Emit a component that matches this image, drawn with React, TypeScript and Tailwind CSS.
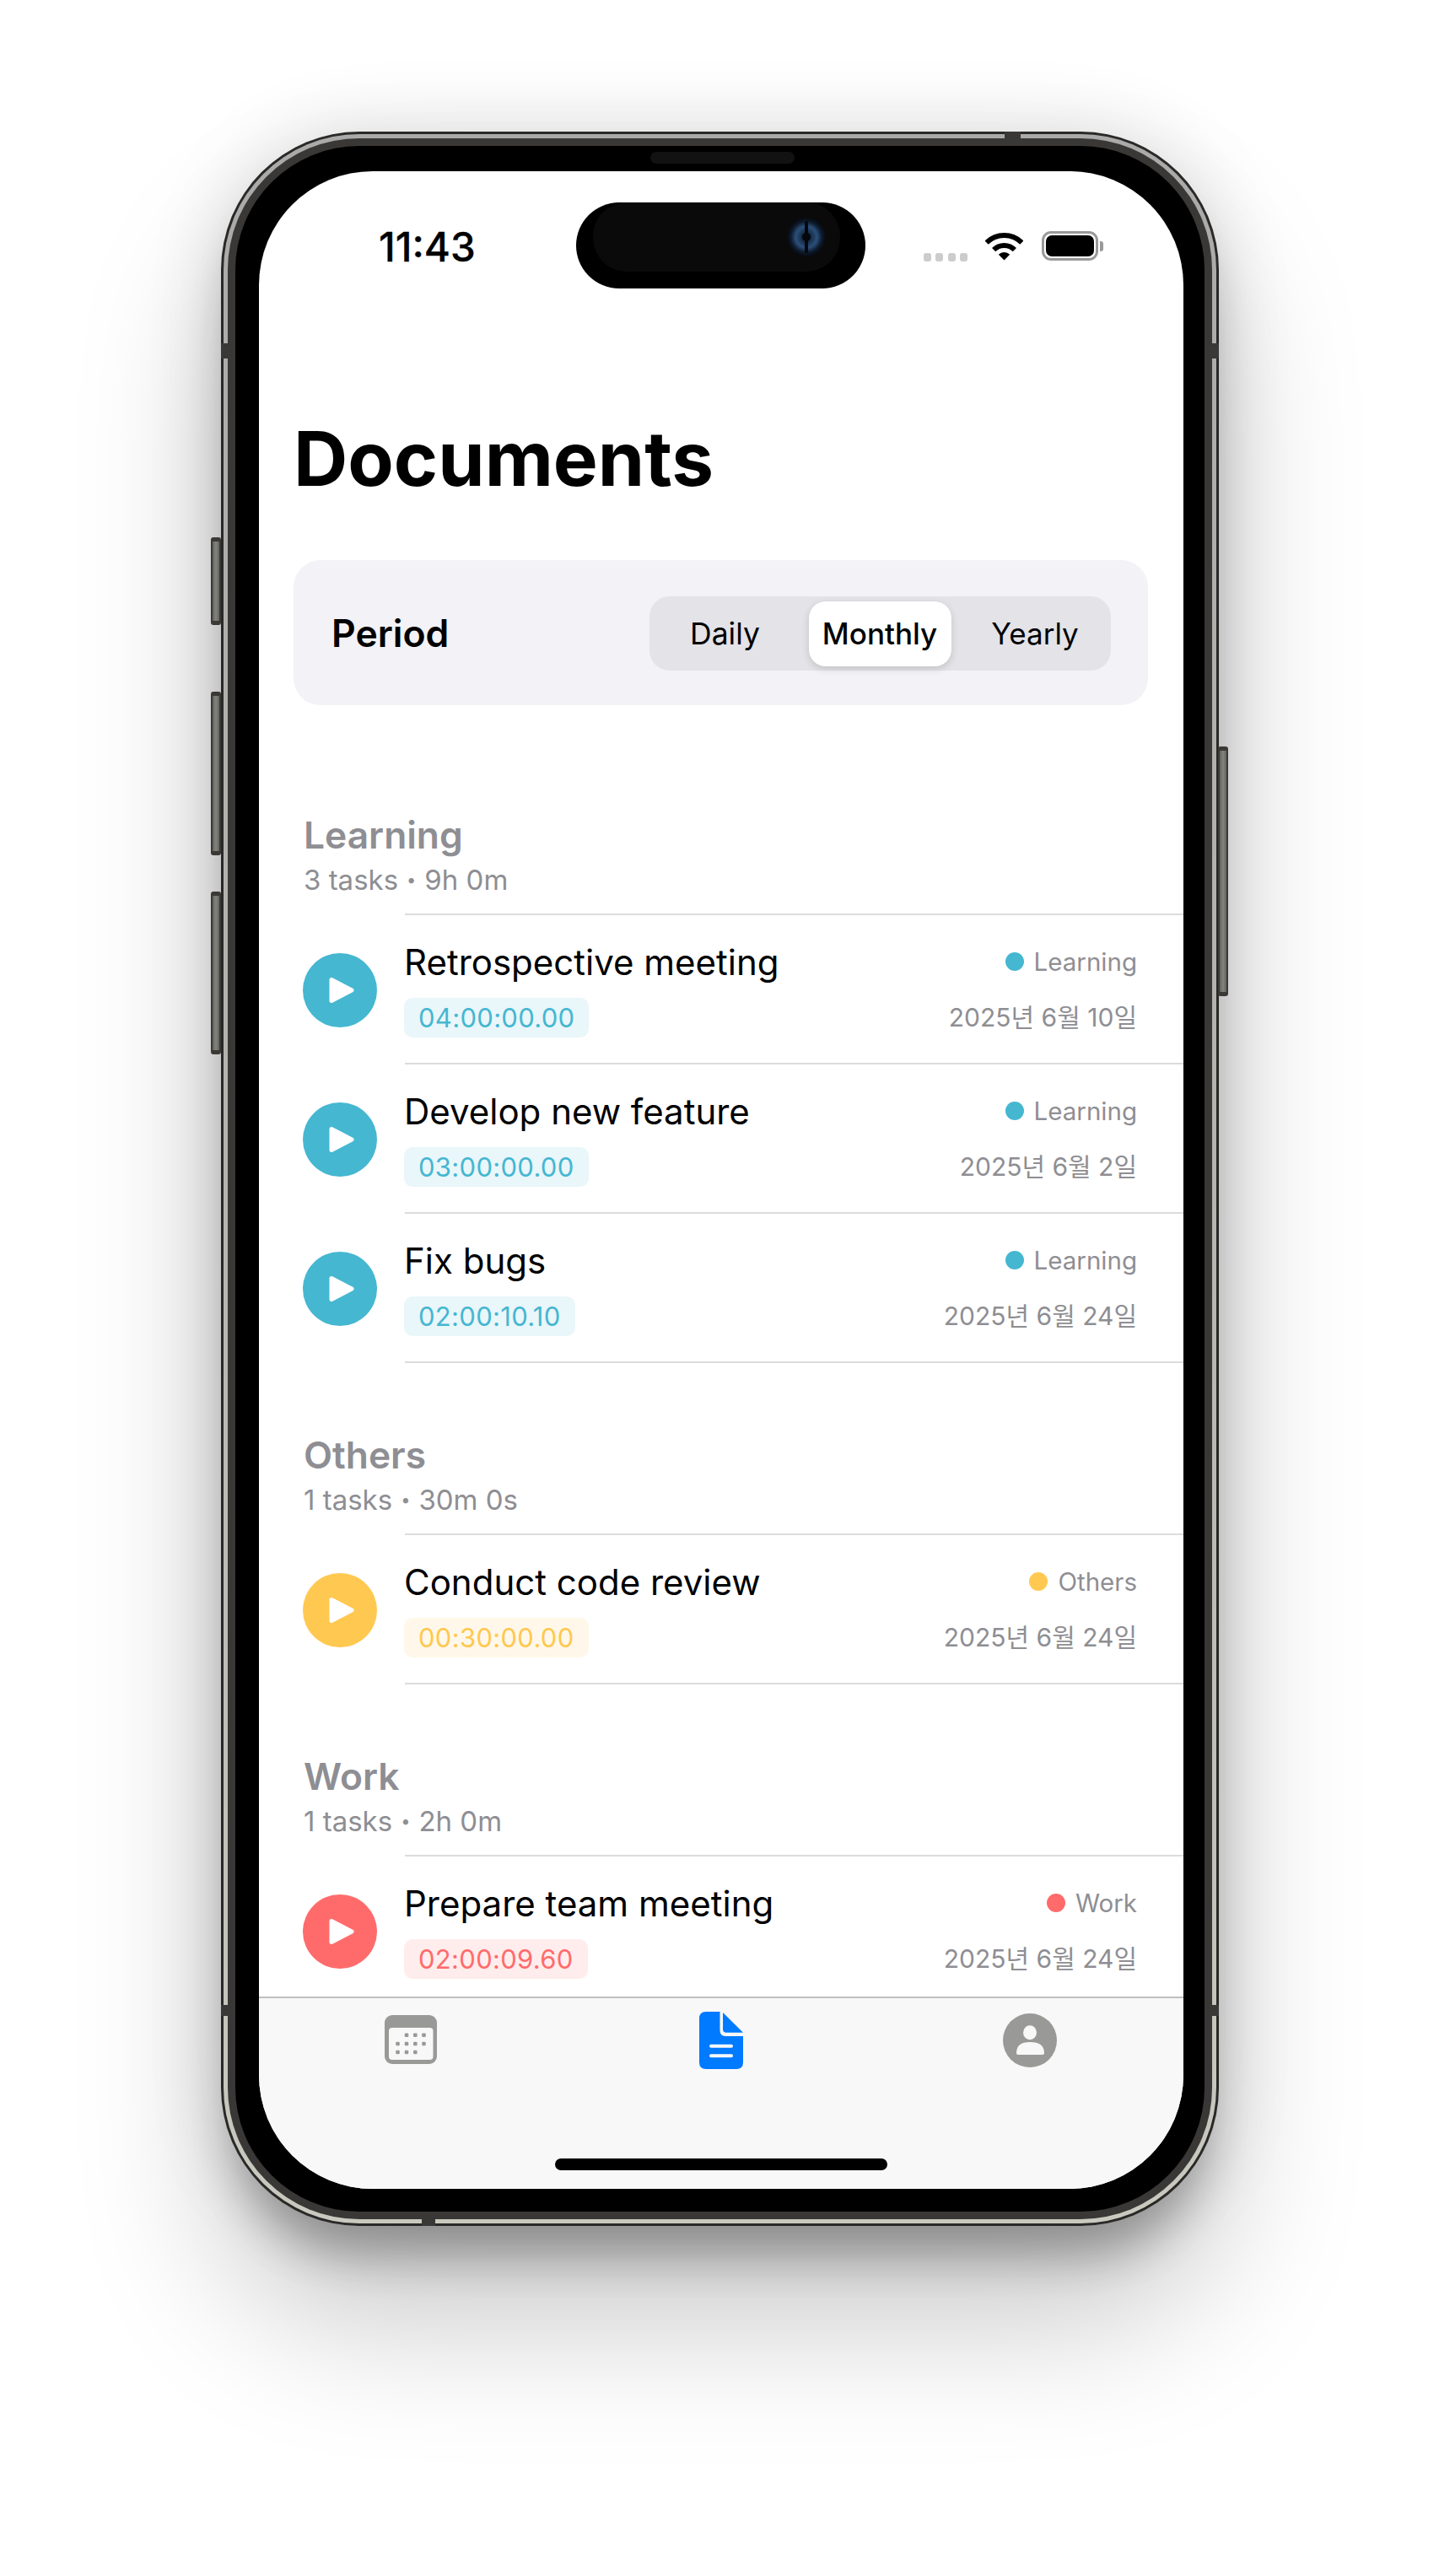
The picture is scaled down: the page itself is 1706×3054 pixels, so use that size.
const font = "font-['Inter','Noto_Sans_CJK_KR',sans-serif]";

function Play() {
  return (
    <svg width="30" height="32" viewBox="0 0 30 32">
      <path d="M3 3.5 L27 16 L3 28.5 Z" fill="#fff" stroke="#fff" strokeWidth="5" strokeLinejoin="round" />
    </svg>
  );
}

function Wifi() {
  return (
    <svg width="45" height="34" viewBox="0 0 45 34">
      <path d="M1.64 12.64 A29.5 29.5 0 0 1 43.36 12.64" fill="none" stroke="#000" strokeWidth="6" />
      <path d="M10.13 21.13 A17.5 17.5 0 0 1 34.87 21.13" fill="none" stroke="#000" strokeWidth="6" />
      <path d="M22.5 33.5 L15.8 26.8 A9.5 9.5 0 0 1 29.2 26.8 Z" fill="#000" />
    </svg>
  );
}

function Camera() {
  return (
    <svg width="46" height="46" viewBox="0 0 46 46">
      <defs>
        <radialGradient id="cam" cx="50%" cy="50%" r="50%">
          <stop offset="0%" stopColor="#05070c" />
          <stop offset="30%" stopColor="#1a3350" />
          <stop offset="55%" stopColor="#2b4f7a" />
          <stop offset="80%" stopColor="#0e1a2b" />
          <stop offset="100%" stopColor="#060a12" />
        </radialGradient>
      </defs>
      <circle cx="23" cy="23" r="23" fill="url(#cam)" />
      <rect x="21" y="4" width="4" height="38" rx="2" fill="#05070c" />
      <circle cx="23" cy="23" r="5" fill="#05070c" />
    </svg>
  );
}

function CalendarIcon() {
  const dots = [
    [26, 23.7], [36.3, 23.7], [46.5, 23.7],
    [15.5, 34], [26, 34], [36.3, 34], [46.5, 34],
    [15.5, 44], [26, 44], [36.3, 44],
  ];
  return (
    <svg width="62" height="58" viewBox="0 0 62 58">
      <rect width="62" height="58" rx="9" fill="#999a97" />
      <rect x="5" y="15" width="52.5" height="38" rx="4" fill="#f8f8f8" />
      {dots.map(([x, y]) => (
        <rect key={`${x}-${y}`} x={x - 2.3} y={y - 2.3} width="4.6" height="4.6" rx="1.2" fill="#999a97" />
      ))}
    </svg>
  );
}

function DocIcon() {
  return (
    <svg width="52" height="68" viewBox="0 0 52 68">
      <path d="M8 0 H24.5 V22 Q24.5 29 31 29 H52 V60 Q52 68 44 68 H8 Q0 68 0 60 V8 Q0 0 8 0 Z" fill="#007aff" />
      <path d="M28 1 L52 24.7 H32 Q28 24.7 28 21 Z" fill="#007aff" />
      <rect x="12" y="38.7" width="28" height="4" rx="2" fill="#f8f8f8" />
      <rect x="12" y="50.2" width="28" height="4" rx="2" fill="#f8f8f8" />
    </svg>
  );
}

function PersonIcon() {
  return (
    <svg width="64" height="64" viewBox="0 0 64 64">
      <circle cx="32" cy="32" r="32" fill="#999a97" />
      <ellipse cx="32" cy="22.7" rx="8" ry="8.5" fill="#f8f8f8" />
      <path d="M16 47 Q16 34 32 34 Q49 34 49 47 Q49 49 47 49 H18 Q16 49 16 47 Z" fill="#f8f8f8" />
    </svg>
  );
}

type Task = { name: string; time: string; date: string };
type Section = {
  label: string;
  count: string;
  total: string;
  dot: string;
  text: string;
  badge: string;
  tasks: Task[];
};

const sections: Section[] = [
  {
    label: "Learning",
    count: "3 tasks",
    total: "9h 0m",
    dot: "bg-[#45b7d1]",
    text: "text-[#45b7d1]",
    badge: "bg-[#e9f6fa]",
    tasks: [
      { name: "Retrospective meeting", time: "04:00:00.00", date: "2025년 6월 10일" },
      { name: "Develop new feature", time: "03:00:00.00", date: "2025년 6월 2일" },
      { name: "Fix bugs", time: "02:00:10.10", date: "2025년 6월 24일" },
    ],
  },
  {
    label: "Others",
    count: "1 tasks",
    total: "30m 0s",
    dot: "bg-[#ffc850]",
    text: "text-[#ffc850]",
    badge: "bg-[#fff8ea]",
    tasks: [{ name: "Conduct code review", time: "00:30:00.00", date: "2025년 6월 24일" }],
  },
  {
    label: "Work",
    count: "1 tasks",
    total: "2h 0m",
    dot: "bg-[#ff6b6b]",
    text: "text-[#ff6b6b]",
    badge: "bg-[#ffeded]",
    tasks: [{ name: "Prepare team meeting", time: "02:00:09.60", date: "2025년 6월 24일" }],
  },
];

function Row({ task, section }: { task: Task; section: Section }) {
  return (
    <div className="flex h-[177px]">
      <div className="flex w-[173px] shrink-0 items-center pl-[52px]">
        <div className={`flex h-[88px] w-[88px] items-center justify-center rounded-full pl-[3px] ${section.dot}`}>
          <Play />
        </div>
      </div>
      <div className="flex flex-1 flex-col border-b-2 border-[#dcdcdc] pt-[27px] pr-[55px]">
        <div className="flex h-[56px] items-center justify-between">
          <span className="-ml-[1px] pt-[2px] text-[42px] leading-[56px] text-black">{task.name}</span>
          <span className="flex items-center gap-[12px] text-[29.5px] leading-[40px] text-[#8e8e93]">
            <span className={`h-[22px] w-[22px] rounded-full ${section.dot}`} />
            {section.label}
          </span>
        </div>
        <div className="mt-[15px] flex h-[47px] items-center justify-between">
          <span className={`-ml-[1px] rounded-[10px] px-[17px] text-[31px] leading-[47px] tracking-[0.3px] ${section.badge} ${section.text}`}>
            {task.time}
          </span>
          <span className="text-[30px] leading-[47px] text-[#8e8e93]">{task.date}</span>
        </div>
      </div>
    </div>
  );
}

function SideButton({ className }: { className: string }) {
  return (
    <div
      className={`absolute w-[12px] rounded-[3px] border-x-2 border-y-[5px] border-[#3a3936] bg-[linear-gradient(90deg,#62625e,#85857f_50%,#62625e)] ${className}`}
    />
  );
}

export default function App() {
  return (
    <div className={`min-h-[3054px] w-full overflow-hidden bg-white pt-[156px] pl-[262px] ${font}`}>
      <div className="relative h-[2483px] w-[1183px]">
        <SideButton className="left-[-12px] top-[481px] h-[104px]" />
        <SideButton className="left-[-12px] top-[664px] h-[194px]" />
        <SideButton className="left-[-12px] top-[901px] h-[193px]" />
        <SideButton className="right-[-11px] top-[729px] h-[296px]" />

        <div className="h-full rounded-[164px] bg-[#2a2927] p-[3px] shadow-[0_50px_50px_-15px_rgba(0,0,0,0.24),0_110px_170px_rgba(0,0,0,0.22),0_0_90px_rgba(0,0,0,0.14)]">
          <div className="h-full rounded-[161px] bg-[linear-gradient(180deg,#aaaaaa,#b5b5b0_50%,#c9c9bf)] p-[5px]">
            <div className="h-full rounded-[156px] bg-[#3a3836] p-[9px]">
              <div className="h-full rounded-[147px] bg-black pt-[30px] pr-[25px] pb-[27px] pl-[28px]">
                <div className="relative flex h-full flex-col overflow-hidden rounded-[135px] bg-white">
                  {/* status bar */}
                  <div className="flex h-[130px] shrink-0 items-start justify-between pr-[95px] pl-[142px]">
                    <span className="mt-[63px] text-[47.5px] leading-[54px] font-medium text-black [-webkit-text-stroke:0.3px_black]">11:43</span>
                    <div className="flex items-start">
                      <div className="mt-[97px] flex gap-[5.5px]">
                        <span className="h-[10px] w-[9px] rounded-[3px] bg-[#cccccc]" />
                        <span className="h-[10px] w-[9px] rounded-[3px] bg-[#cccccc]" />
                        <span className="h-[10px] w-[9px] rounded-[3px] bg-[#cccccc]" />
                        <span className="h-[10px] w-[9px] rounded-[3px] bg-[#cccccc]" />
                      </div>
                      <div className="mt-[72px] ml-[21px]">
                        <Wifi />
                      </div>
                      <div className="mt-[71px] ml-[22px] flex items-center">
                        <div className="h-[35px] w-[67px] rounded-[11px] border-[3px] border-[#999999] bg-white p-[2px]">
                          <div className="h-full w-full rounded-[7px] bg-black" />
                        </div>
                        <div className="ml-[2px] h-[12px] w-[4px] rounded-r-[3px] bg-[#999999]" />
                      </div>
                    </div>
                  </div>

                  {/* dynamic island */}
                  <div className="absolute top-[37px] left-[376px] h-[102px] w-[343px] rounded-[51px] bg-black">
                    <div className="absolute top-0 left-[20px] h-[82px] w-[293px] rounded-[40px] bg-[#0a0a0a]" />
                    <div className="absolute top-[18px] left-[250px]">
                      <Camera />
                    </div>
                  </div>

                  {/* scroll content */}
                  <div className="min-h-0 flex-1 overflow-hidden">
                    <div className="pr-[42px] pl-[41px]">
                      <h1 className="mt-[161px] text-[89px] leading-[100px] font-bold text-black">Documents</h1>
                      <div className="mt-[70px] flex h-[172px] items-center justify-between rounded-[32px] bg-[#f2f2f7] pt-[2px] pr-[44px] pl-[45px]">
                        <span className="text-[44.5px] leading-[56px] font-semibold text-black">Period</span>
                        <div className="flex h-[88px] w-[547px] items-center justify-between rounded-[24px] bg-[#e3e3e8] px-[6px]">
                          <span className="w-[167px] text-center text-[35.5px] leading-[77px] text-black">Daily</span>
                          <span className="h-[77px] w-[169px] rounded-[20px] bg-white text-center text-[35px] leading-[77px] font-medium text-black shadow-[0_3px_10px_rgba(0,0,0,0.15)]">
                            Monthly
                          </span>
                          <span className="w-[168px] text-center text-[35px] leading-[77px] text-black">Yearly</span>
                        </div>
                      </div>
                    </div>

                    <div className="mt-[127px] flex flex-col gap-[82px]">
                      {sections.map((section) => (
                        <section key={section.label}>
                          <div className="h-[120px] pl-[53px]">
                            <div className="text-[44.3px] leading-[54px] font-semibold text-[#8e8e93]">{section.label}</div>
                            <div className="mt-[6px] flex items-center gap-[10px] text-[33px] leading-[40px] text-[#8e8e93]">
                              <span>{section.count}</span>
                              <span className="text-[20px] leading-[40px]">•</span>
                              <span>{section.total}</span>
                            </div>
                          </div>
                          <div className="ml-[173px] h-[2px] bg-[#dcdcdc]" />
                          {section.tasks.map((task) => (
                            <Row key={task.name} task={task} section={section} />
                          ))}
                        </section>
                      ))}
                    </div>
                  </div>

                  {/* tab bar */}
                  <div className="grid h-[228px] shrink-0 grid-cols-3 border-t-2 border-[#c0c0c0] bg-[#f8f8f8]">
                    <div className="flex justify-center pt-[20px] pr-[6px]">
                      <div className="h-fit"><CalendarIcon /></div>
                    </div>
                    <div className="flex justify-center pt-[16px]">
                      <div className="h-fit"><DocIcon /></div>
                    </div>
                    <div className="flex justify-center pt-[18px] pl-[2px]">
                      <div className="h-fit"><PersonIcon /></div>
                    </div>
                  </div>

                  <div className="absolute bottom-[22px] left-[351px] h-[14px] w-[394px] rounded-full bg-black" />
                </div>
              </div>
            </div>
          </div>
        </div>

        {/* antenna bands */}
        <div className="absolute top-0 left-[929px] h-[16px] w-[19px] bg-[#3a3836]" />
        <div className="absolute bottom-0 left-[238px] h-[17px] w-[16px] bg-[#3a3836]" />
        <div className="absolute top-[251px] left-0 h-[18px] w-[17px] bg-[#3a3836]" />
        <div className="absolute top-[251px] right-0 h-[18px] w-[17px] bg-[#3a3836]" />
        <div className="absolute top-[2221px] left-0 h-[13px] w-[17px] bg-[#3a3836]" />
        <div className="absolute top-[2221px] right-0 h-[13px] w-[17px] bg-[#3a3836]" />

        {/* speaker */}
        <div className="absolute top-[24px] left-[509px] h-[14px] w-[171px] rounded-full bg-[#121212]" />
      </div>
    </div>
  );
}
